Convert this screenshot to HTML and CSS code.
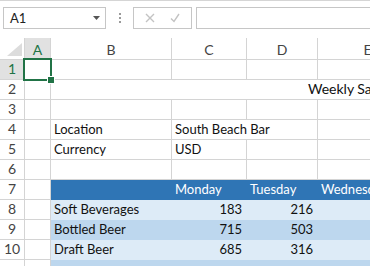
FILE: index.html
```html
<!DOCTYPE html>
<html>
    <head>
        <title>Weekly Sales</title>
        <link rel="stylesheet" href="styles.css">
    </head>
    <body>
        <div class="fbar">
            <div class="namebox">
                <span>A1</span>
                <svg width="7" height="4" viewBox="0 0 7 4"><path d="M0 0h7L3.5 4z" fill="#555"/></svg>
            </div>
            <div class="dots"><i></i><i></i><i></i></div>
            <div class="btns">
                <svg width="10" height="10" viewBox="0 0 10 10"><path d="M1 1l8 8M9 1l-8 8" stroke="#c3c3c3" stroke-width="1.4"/></svg>
                <svg width="10" height="10" viewBox="0 0 10 10"><path d="M1 5.5l3 3L9 1" stroke="#c3c3c3" stroke-width="1.4" fill="none"/></svg>
            </div>
            <div class="finput"></div>
        </div>

        <div class="sheet">
            <div class="ch corner"><svg width="15" height="13" viewBox="0 0 15 13"><path d="M15 0v13H0z" fill="#dcdcdc"/></svg></div>
            <div class="ch sel">A</div>
            <div class="ch">B</div>
            <div class="ch">C</div>
            <div class="ch">D</div>
            <div class="ch">E</div>

            <div class="rh sel">1</div>
            <div class="c active"><span class="handle"></span></div>
            <div class="c"></div><div class="c"></div><div class="c"></div><div class="c"></div>

            <div class="rh">2</div>
            <div class="c"></div>
            <div class="c title span4">Weekly Sales Report</div>

            <div class="rh">3</div>
            <div class="c"></div><div class="c"></div><div class="c"></div><div class="c"></div><div class="c"></div>

            <div class="rh">4</div>
            <div class="c"></div>
            <div class="c">Location</div>
            <div class="c span2">South Beach Bar</div>
            <div class="c"></div>

            <div class="rh">5</div>
            <div class="c"></div>
            <div class="c">Currency</div>
            <div class="c">USD</div>
            <div class="c"></div><div class="c"></div>

            <div class="rh">6</div>
            <div class="c"></div><div class="c"></div><div class="c"></div><div class="c"></div><div class="c"></div>

            <div class="rh">7</div>
            <div class="c"></div>
            <div class="c head"></div>
            <div class="c head">Monday</div>
            <div class="c head">Tuesday</div>
            <div class="c head">Wednesday</div>

            <div class="rh">8</div>
            <div class="c"></div>
            <div class="c band1">Soft Beverages</div>
            <div class="c band1 num">183</div>
            <div class="c band1 num">216</div>
            <div class="c band1"></div>

            <div class="rh">9</div>
            <div class="c"></div>
            <div class="c band2">Bottled Beer</div>
            <div class="c band2 num">715</div>
            <div class="c band2 num">503</div>
            <div class="c band2"></div>

            <div class="rh">10</div>
            <div class="c"></div>
            <div class="c band1">Draft Beer</div>
            <div class="c band1 num">685</div>
            <div class="c band1 num">316</div>
            <div class="c band1"></div>

            <div class="rh"></div>
            <div class="c"></div>
            <div class="c band2"></div><div class="c band2"></div><div class="c band2"></div><div class="c band2"></div>
        </div>
    </body>
</html>
```

FILE: styles.css
```css
body{
    margin:0;
    width:370px;
    height:266px;
    overflow:hidden;
    background:#fff;
    font-family:Lato, "Liberation Sans", sans-serif;
    font-size:13px;
    color:#111;
}
.fbar{
    display:flex;
    height:38px;
    box-sizing:border-box;
    border-top:1px solid #d5d5d5;
    padding-top:6px;
}
.namebox{
    margin-left:3px;
    width:103px;
    height:22px;
    box-sizing:border-box;
    border:1px solid #c6c6c6;
    display:flex;
    align-items:center;
    justify-content:space-between;
    padding:0 5px 0 6px;
    color:#222;
}
.dots{
    width:27px;
    height:22px;
    display:flex;
    flex-direction:column;
    align-items:center;
    justify-content:center;
    gap:2px;
}
.dots i{
    width:2px;
    height:2px;
    background:#9a9a9a;
}
.btns{
    width:59px;
    height:22px;
    box-sizing:border-box;
    border:1px solid #c6c6c6;
    display:flex;
    align-items:center;
    justify-content:space-around;
    padding:0 4px;
}
.finput{
    margin-left:4px;
    flex:1;
    margin-right:-6px;
    height:22px;
    box-sizing:border-box;
    border:1px solid #c6c6c6;
}
.sheet{
    display:grid;
    grid-template-columns:25px 26px 121px 75px 71px 100px;
    grid-template-rows:22px repeat(11, 20px);
}
.sheet > div{
    box-sizing:border-box;
    border-right:1px solid #d4d4d4;
    border-bottom:1px solid #d4d4d4;
    white-space:nowrap;
    overflow:hidden;
}
.ch{
    display:flex;
    align-items:center;
    justify-content:center;
    color:#444;
    padding-top:2px;
    font-size:14px;
}
.corner{
    align-items:flex-end;
    justify-content:flex-end;
    padding:0 2px 3px 0;
}
.ch.sel{
    background:#e1e1e1;
    color:#217346;
    border-bottom:2px solid #217346;
}
.rh{
    display:flex;
    align-items:flex-end;
    justify-content:center;
    padding-bottom:2px;
    color:#444;
    font-size:14px;
}
.rh.sel{
    background:#e1e1e1;
    color:#217346;
}
.c{
    padding:0 4px 2px 3px;
    display:flex;
    align-items:flex-end;
}
.span2{ grid-column:span 2; }
.span4{ grid-column:span 4; }
.title{
    padding-left:257px;
    font-size:14px;
}
.sheet > .active{
    overflow:visible;
    position:relative;
}
.active::before{
    content:"";
    position:absolute;
    left:-2px;
    top:-2px;
    right:-2px;
    bottom:-2px;
    border:2px solid #217346;
}
.handle{
    position:absolute;
    right:-5px;
    bottom:-5px;
    width:6px;
    height:6px;
    background:#217346;
    border:1px solid #fff;
    z-index:2;
}
.sheet > .head{
    background:#2f75b5;
    border-color:transparent;
    color:#fff;
}
.sheet > .band1{
    background:#ddebf7;
    border-color:transparent;
}
.sheet > .band2{
    background:#bdd7ee;
    border-color:transparent;
}
.num{
    justify-content:flex-end;
}
```
